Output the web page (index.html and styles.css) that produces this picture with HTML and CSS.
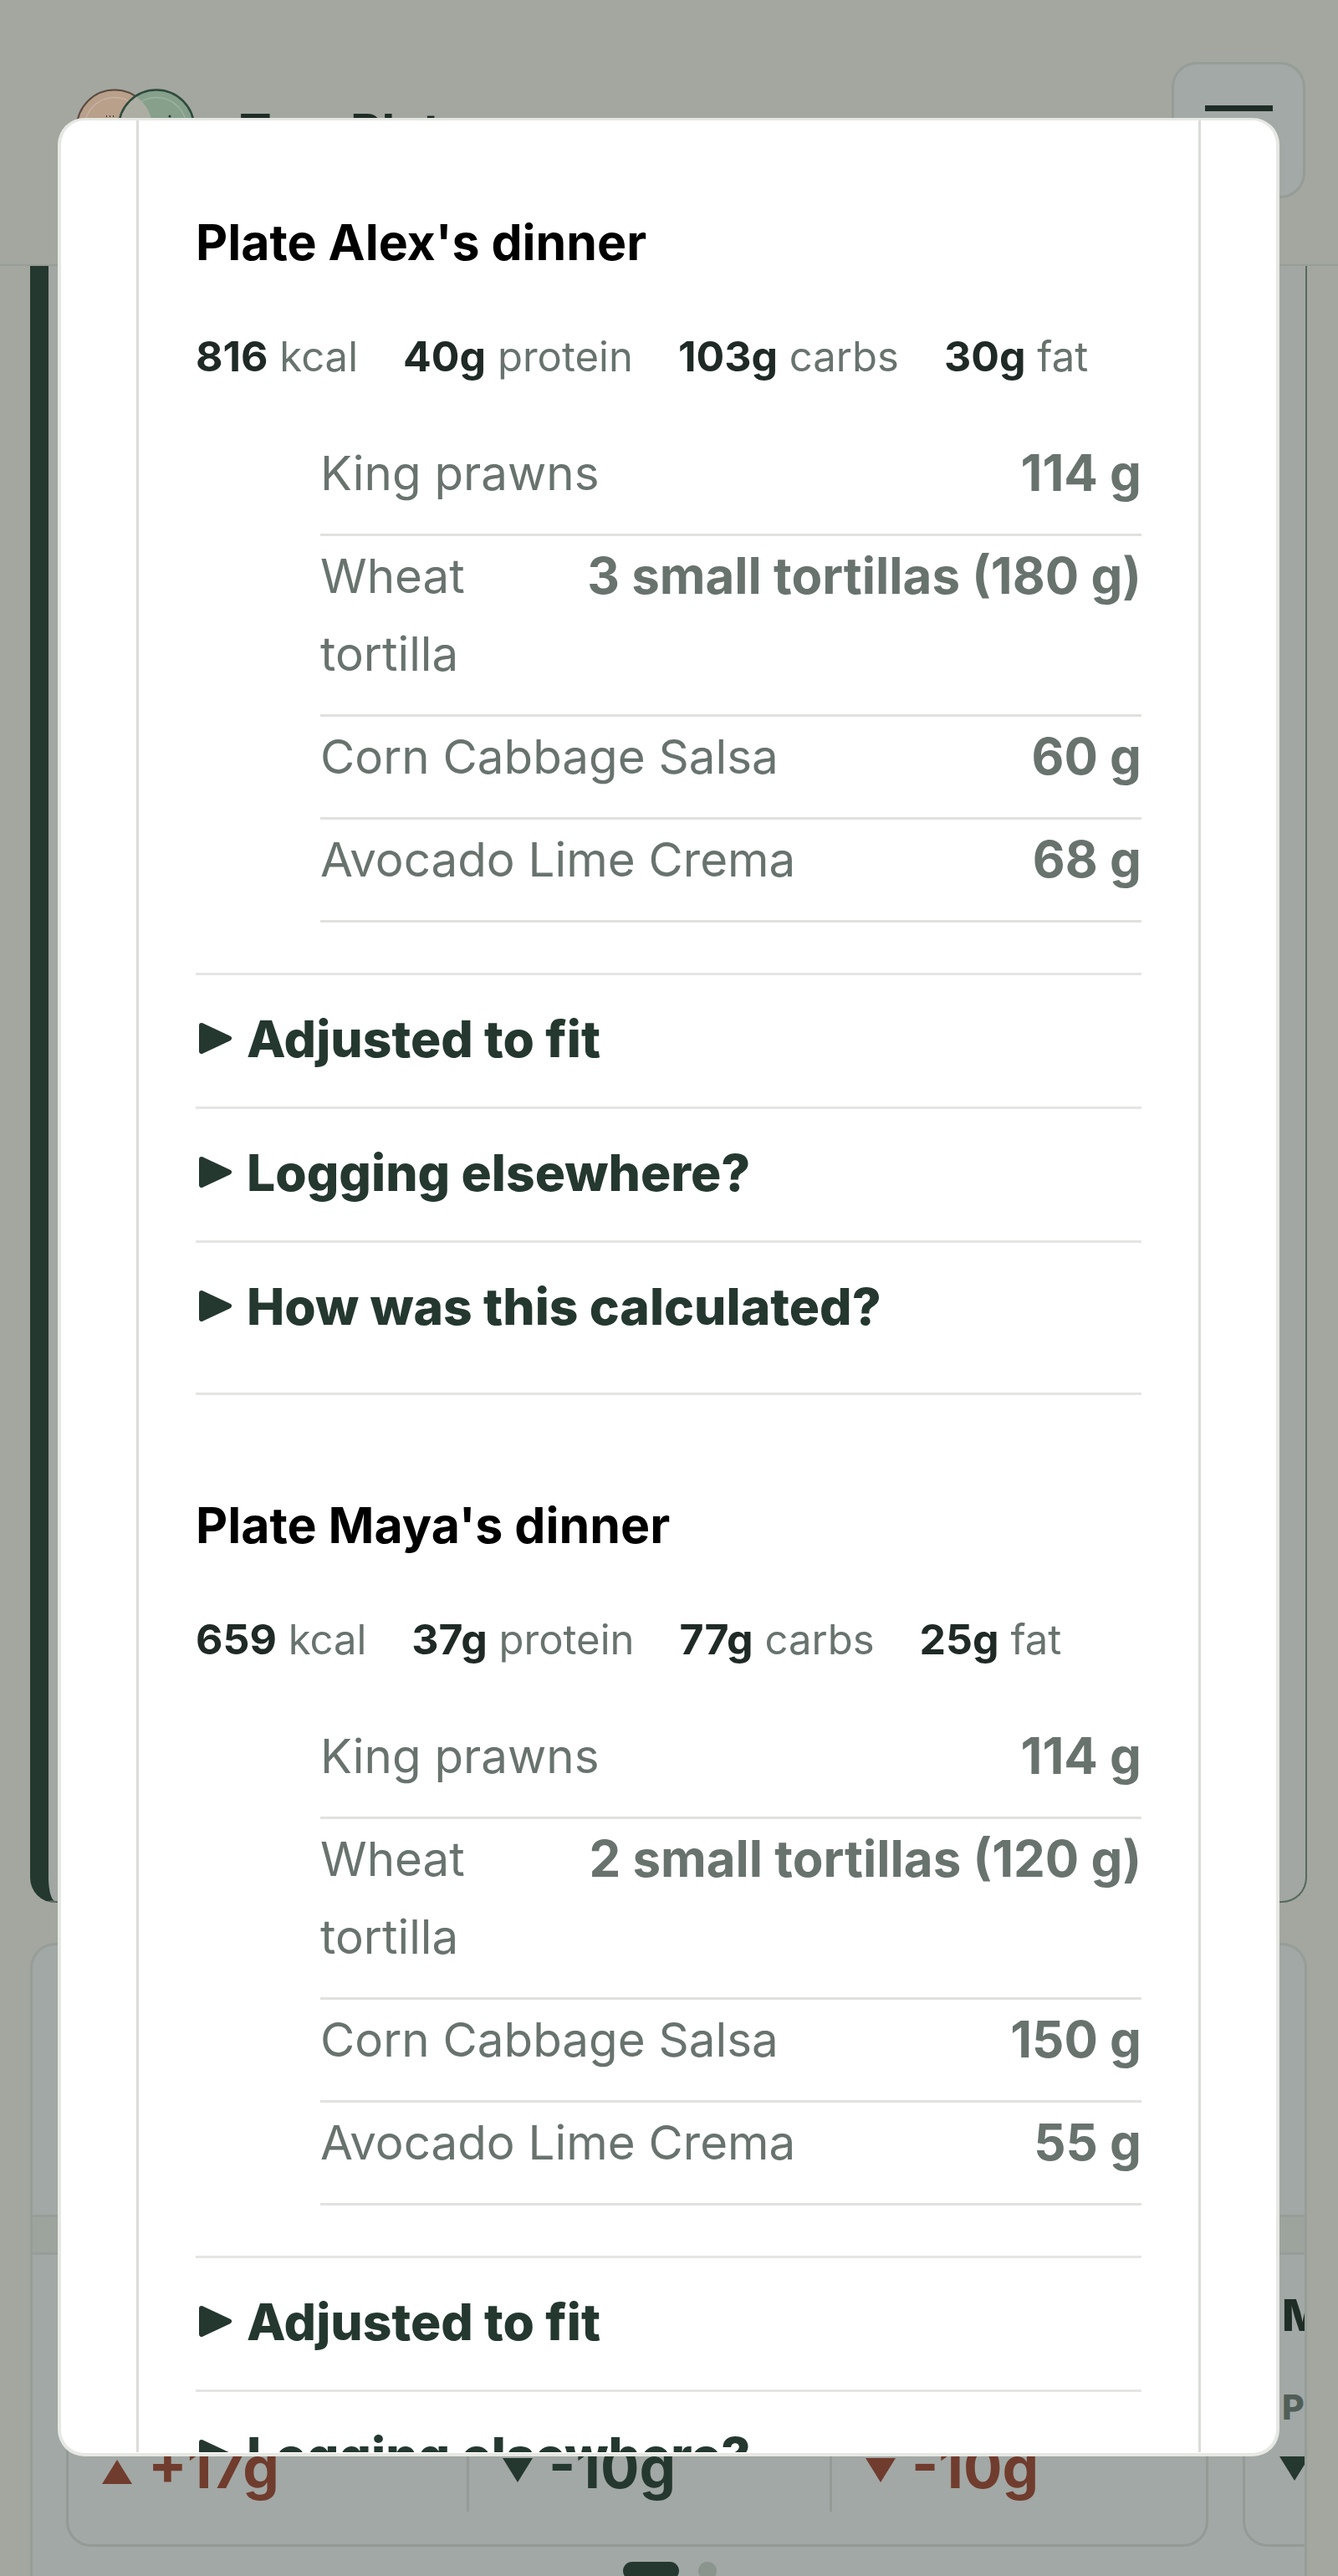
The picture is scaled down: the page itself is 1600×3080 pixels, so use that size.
FILE: index.html
```html
<!DOCTYPE html>
<html>
<head>
    <link rel="stylesheet" href="styles.css">
</head>

<body>
    <div class="page">
        <header class="topbar">
            <svg class="logo" viewBox="0 0 150 100" width="150" height="100">
                <circle cx="47" cy="47.5" r="45" fill="#b8a08b" stroke="#5b4a3f" stroke-width="2"/>
                <circle cx="47" cy="47.5" r="36" fill="none" stroke="#c6b3a1" stroke-width="1.5"/>
                <circle cx="97" cy="47.5" r="45" fill="#86a08c"/>
                <circle cx="97" cy="47.5" r="36" fill="none" stroke="#9db2a2" stroke-width="1.5"/>
                <path d="M72 10a45 45 0 0 0 0 75a45 45 0 0 0 0-75z" fill="#acaea3"/>
                <circle cx="97" cy="47.5" r="45" fill="none" stroke="#2e4a3d" stroke-width="2.5"/>
                <path d="M37 34h1M41 34h1M45 34h1" stroke="#3a332c" stroke-width="2"/>
                <circle cx="113" cy="34" r="1.500" fill="#24382f"/>
            </svg>
            <span class="brand">Two Plates</span>
            <div class="menubtn"><i></i></div>
        </header>

        <div class="planCard"></div>

        <div class="compareCard">
            <div class="cardTop"></div>
            <div class="tabs"></div>
            <div class="diffRow">
                <div class="diffBox">
                    <div class="diff up"><span class="arrow rise"></span>+17g</div>
                    <div class="diff"><span class="arrow"></span>-10g</div>
                    <div class="diff up"><span class="arrow"></span>-10g</div>
                </div>
                <div class="nextBox">
                    <b class="nextName">M</b>
                    <b class="nextLabel">P</b>
                    <span class="arrow"></span>
                </div>
            </div>
            <div class="dots"><span class="dot on"></span><span class="dot"></span></div>
        </div>
    </div>

    <div class="modal">
        <div class="sheet">
            <h2>Plate Alex's dinner</h2>
            <p class="macros">
                <span><b>816</b> kcal</span><span><b>40g</b> protein</span><span><b>103g</b> carbs</span><span><b>30g</b> fat</span>
            </p>
            <div class="foods">
                <div class="food"><span>King prawns</span><span class="amt">114 g</span></div>
                <div class="food"><span>Wheat tortilla</span><span class="amt">3 small tortillas (180 g)</span></div>
                <div class="food"><span>Corn Cabbage Salsa</span><span class="amt">60 g</span></div>
                <div class="food"><span>Avocado Lime Crema</span><span class="amt">68 g</span></div>
            </div>
            <div class="more first"><svg class="tri" viewBox="0 0 39 37"><path d="M3 3L36 18.500L3 34z"/></svg>Adjusted to fit</div>
            <div class="more"><svg class="tri" viewBox="0 0 39 37"><path d="M3 3L36 18.500L3 34z"/></svg>Logging elsewhere?</div>
            <div class="more last"><svg class="tri" viewBox="0 0 39 37"><path d="M3 3L36 18.500L3 34z"/></svg>How was this calculated?</div>

            <h2>Plate Maya's dinner</h2>
            <p class="macros">
                <span><b>659</b> kcal</span><span><b>37g</b> protein</span><span><b>77g</b> carbs</span><span><b>25g</b> fat</span>
            </p>
            <div class="foods">
                <div class="food"><span>King prawns</span><span class="amt">114 g</span></div>
                <div class="food"><span>Wheat tortilla</span><span class="amt">2 small tortillas (120 g)</span></div>
                <div class="food"><span>Corn Cabbage Salsa</span><span class="amt">150 g</span></div>
                <div class="food"><span>Avocado Lime Crema</span><span class="amt">55 g</span></div>
            </div>
            <div class="more first"><svg class="tri" viewBox="0 0 39 37"><path d="M3 3L36 18.500L3 34z"/></svg>Adjusted to fit</div>
            <div class="more"><svg class="tri" viewBox="0 0 39 37"><path d="M3 3L36 18.500L3 34z"/></svg>Logging elsewhere?</div>
        </div>
    </div>
</body>

</html>
```

FILE: styles.css
```css
html, body {
    margin: 0;
    height: 3080px;
    overflow: hidden;
}

body {
    position: relative;
    background-color: #a3a79f;
    font-family: Inter, "Liberation Sans", sans-serif;
    color: #24382f;
}

.page {
    height: 3080px;
    overflow: hidden;
}

/* page behind the dialog */
.topbar {
    height: 318px;
    box-sizing: border-box;
    border-bottom: 2px solid #979d97;
    display: flex;
    align-items: flex-start;
    padding: 74px 39px 0 90px;
}

.logo {
    margin-top: 31px;
}

.brand {
    margin: 38px 0 0 46px;
    font-size: 58px;
    font-weight: 700;
    line-height: 90px;
    color: #1f2d27;
}

.menubtn {
    margin-left: auto;
    width: 160px;
    height: 163px;
    box-sizing: border-box;
    background-color: #a3a9a6;
    border: 3px solid #969d98;
    border-radius: 30px;
    padding-top: 49px;
}

.menubtn i {
    display: block;
    width: 81px;
    height: 7px;
    margin: 0 auto;
    background-color: #1f2d27;
}

.planCard {
    margin: 0 37px 0 36px;
    height: 1957px;
    box-sizing: border-box;
    background-color: #a2a7a4;
    border-left: 22px solid #24382f;
    border-right: 2px solid #566a60;
    border-bottom: 2px solid #566a60;
    border-radius: 0 0 30px 30px;
}

.compareCard {
    margin: 48px 37px 0 36px;
    height: 757px;
    box-sizing: border-box;
    border: 3px solid #979d98;
    border-bottom: 0;
    border-radius: 30px 30px 0 0;
    background-color: #a2a8a5;
    overflow: hidden;
}

.cardTop {
    height: 322px;
    border-bottom: 3px solid #979d98;
}

.tabs {
    height: 42px;
    background-color: #9da39d;
    border-bottom: 3px solid #979d98;
}

.diffRow {
    display: flex;
    gap: 41px;
    padding-left: 40px;
}

.diffBox, .nextBox {
    flex: none;
    box-sizing: border-box;
    height: 349px;
    border: 3px solid #949a96;
    border-top: 0;
    border-radius: 0 0 30px 30px;
}

.diffBox {
    width: 1366px;
    padding-bottom: 39px;
    display: grid;
    grid-template-columns: 476px 434px 1fr;
    align-items: end;
}

.diff {
    display: flex;
    align-items: flex-start;
    gap: 19px;
    height: 93px;
    padding: 98px 0 0 40px;
    border-left: 3px solid #949a96;
    font-size: 69px;
    font-weight: 700;
    line-height: 80px;
    color: #24382f;
}

.diff:first-child {
    border-left: 0;
}

.diff.up {
    color: #703c2e;
}

.arrow {
    display: block;
    flex: none;
    width: 0;
    height: 0;
    margin-top: 29px;
    border-left: 18px solid transparent;
    border-right: 18px solid transparent;
    border-top: 29px solid currentColor;
}

.arrow.rise {
    margin-top: 31px;
    border-top: 0;
    border-bottom: 29px solid currentColor;
}

.nextBox {
    width: 300px;
    padding: 43px 0 0 41px;
    color: #24382f;
}

.nextName, .nextLabel {
    display: block;
    font-weight: 800;
}

.nextName {
    font-size: 52px;
    line-height: 60px;
    margin-left: 3px;
    color: #1f2d27;
}

.nextLabel {
    font-size: 41px;
    line-height: 50px;
    margin: 54px 0 34px 3px;
    color: #505e58;
}

.nextBox .arrow {
    margin-top: 0;
}

.dots {
    display: flex;
    align-items: center;
    gap: 23px;
    margin: 18px 0 0 706px;
}

.dot {
    width: 22px;
    height: 22px;
    border-radius: 50%;
    background-color: #8c948e;
}

.dot.on {
    width: 67px;
    border-radius: 11px;
    background-color: #24382f;
}

/* dialog */
.modal {
    position: absolute;
    left: 69px;
    top: 141px;
    width: 1461px;
    height: 2796px;
    box-sizing: border-box;
    background-color: #fff;
    border: 4px solid #e6e8e3;
    border-top-width: 3px;
    border-radius: 32px;
    padding: 0 90px 1px;
    overflow: hidden;
}

.sheet {
    height: 100%;
    box-sizing: border-box;
    border-left: 3px solid #dadcd8;
    border-right: 3px solid #dadcd8;
    padding: 96px 68px 0;
    overflow: hidden;
}

h2 {
    margin: 0;
    font-size: 59px;
    font-weight: 700;
    line-height: 100px;
    color: #000;
}

.macros {
    margin: 50px 0 0;
    display: flex;
    gap: 54px;
    font-size: 49px;
    line-height: 72px;
    color: #68736e;
}

.macros b {
    font-size: 50px;
    font-weight: 700;
    color: #1f2a26;
}

.foods {
    margin: 55px 0 0 149px;
    font-size: 56.500px;
    line-height: 93px;
    color: #68736e;
}

.food {
    display: flex;
    justify-content: space-between;
    gap: 24px;
    padding: 1px 0 26px;
    border-bottom: 3px solid #e0e2dd;
}

.food .amt {
    flex: none;
    font-size: 60px;
    font-weight: 700;
}

.more {
    display: flex;
    align-items: center;
    height: 160px;
    box-sizing: border-box;
    padding-bottom: 6px;
    border-bottom: 3px solid #e5e6e3;
    font-size: 60.500px;
    font-weight: 800;
    color: #24382f;
}

.more.first {
    height: 163px;
    margin-top: 60px;
    border-top: 3px solid #e5e6e3;
}

.more.last {
    height: 182px;
    padding-bottom: 28px;
    margin-bottom: 106px;
}

.tri {
    flex: none;
    width: 39px;
    height: 37px;
    margin: 0 18px 0 4px;
    fill: #24382f;
    stroke: #24382f;
    stroke-width: 6;
    stroke-linejoin: round;
}
```
